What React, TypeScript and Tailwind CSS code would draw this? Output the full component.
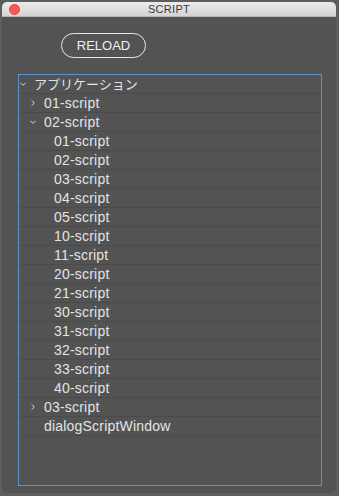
import React from 'react';

type Node = { label: string; level: number; chevron?: 'down' | 'right' };

const rows: Node[] = [
    { label: 'アプリケーション', level: 0, chevron: 'down' },
    { label: '01-script', level: 1, chevron: 'right' },
    { label: '02-script', level: 1, chevron: 'down' },
    ...['01', '02', '03', '04', '05', '10', '11', '20', '21', '30', '31', '32', '33', '40'].map(n => ({
        label: `${n}-script`,
        level: 2,
    })),
    { label: '03-script', level: 1, chevron: 'right' },
    { label: 'dialogScriptWindow', level: 1 },
];

const Chevron: React.FC<{ dir: 'down' | 'right' }> = ({ dir }) => (
    <svg width="6" height="6" viewBox="0 0 6 6" className="block">
        {dir === 'down' ? (
            <path d="M0.5 1.8 L3 4.3 L5.5 1.8" fill="none" stroke="#d8d8d8" strokeWidth="1" />
        ) : (
            <path d="M1.8 0.5 L4.3 3 L1.8 5.5" fill="none" stroke="#d8d8d8" strokeWidth="1" />
        )}
    </svg>
);

const App: React.FC = () => {
    return (
        <div
            className="w-[339px] h-[496px] bg-[#5d5d5d] pt-[2px] pl-[2px] overflow-hidden"
            style={{ fontFamily: '"Liberation Sans", "Noto Sans CJK JP", sans-serif' }}
        >
            <div className="w-[334px] h-[491px] rounded-[5px] overflow-hidden bg-[#535353] flex flex-col">
                {/* title bar */}
                <div className="relative h-[15px] shrink-0 bg-gradient-to-b from-[#ececec] to-[#d3d3d3] border-b border-[#b5b5b5] flex items-center justify-center">
                    <div className="absolute left-[7px] top-[2px] w-[11px] h-[11px] rounded-full bg-[#fc5753] border border-[#df4744]" />
                    <span className="text-[11px] leading-none text-[#3a3a3a] tracking-[0.3px]">SCRIPT</span>
                </div>

                <div className="flex flex-col">
                    <button className="mt-[16px] ml-[59px] w-[85px] h-[25px] rounded-full border border-[#e8e8e8] text-[13px] leading-none text-[#f0f0f0] flex items-center justify-center">
                        RELOAD
                    </button>

                    <div className="mt-[16px] ml-[16px] w-[304px] h-[412px] border border-[#5b93d0]">
                        {rows.map((r, i) => (
                            <div
                                key={i}
                                className="h-[19px] border-b border-[#4a4a4a] flex items-center"
                                style={{ paddingLeft: r.level * 10 }}
                            >
                                <div className="w-[15px] flex items-center pl-[1px]">
                                    {r.chevron && <Chevron dir={r.chevron} />}
                                </div>
                                <span
                                    className={
                                        i === 0
                                            ? 'text-[13px] leading-none text-[#e4e4e4]'
                                            : 'text-[14px] leading-none tracking-[0.2px] text-[#e4e4e4]'
                                    }
                                >
                                    {r.label}
                                </span>
                            </div>
                        ))}
                    </div>
                </div>
            </div>
        </div>
    );
};

export default App;
